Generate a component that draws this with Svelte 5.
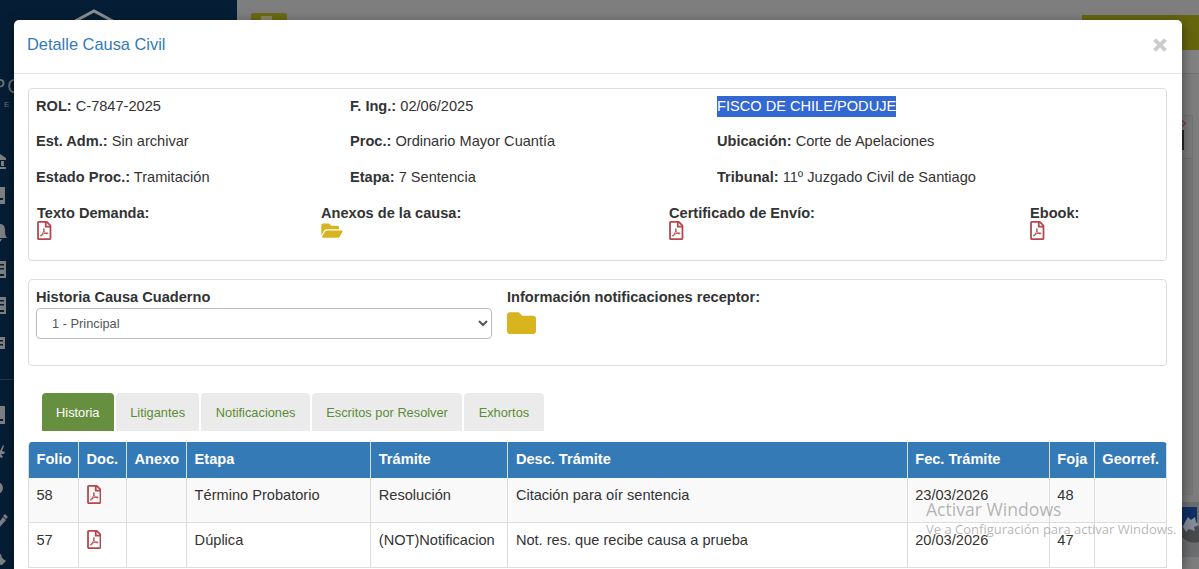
<script lang="ts">
	type Tramite = {
		folio: number;
		etapa: string;
		tramite: string;
		desc: string;
		fecha: string;
		foja: number;
	};

	const datos = [
		[
			{ label: "ROL:", value: "C-7847-2025" },
			{ label: "F. Ing.:", value: "02/06/2025" },
			{ label: "", value: "FISCO DE CHILE/PODUJE" },
		],
		[
			{ label: "Est. Adm.:", value: "Sin archivar" },
			{ label: "Proc.:", value: "Ordinario Mayor Cuantía" },
			{ label: "Ubicación:", value: "Corte de Apelaciones" },
		],
		[
			{ label: "Estado Proc.:", value: "Tramitación" },
			{ label: "Etapa:", value: "7 Sentencia" },
			{ label: "Tribunal:", value: "11º Juzgado Civil de Santiago" },
		],
	];

	const documentos = [
		{ label: "Texto Demanda:", icon: "pdf" },
		{ label: "Anexos de la causa:", icon: "folder" },
		{ label: "Certificado de Envío:", icon: "pdf" },
		{ label: "Ebook:", icon: "pdf" },
	];

	const tabs = ["Historia", "Litigantes", "Notificaciones", "Escritos por Resolver", "Exhortos"];
	let activeTab = $state("Historia");
	let cuaderno = $state("1");

	const columnas = [
		{ label: "Folio", width: 50 },
		{ label: "Doc.", width: 48 },
		{ label: "Anexo", width: 60 },
		{ label: "Etapa", width: 184 },
		{ label: "Trámite", width: 137 },
		{ label: "Desc. Trámite", width: 399 },
		{ label: "Fec. Trámite", width: 142 },
		{ label: "Foja", width: 45 },
		{ label: "Georref.", width: 72 },
	];

	const historia: Tramite[] = [
		{
			folio: 58,
			etapa: "Término Probatorio",
			tramite: "Resolución",
			desc: "Citación para oír sentencia",
			fecha: "23/03/2026",
			foja: 48,
		},
		{
			folio: 57,
			etapa: "Dúplica",
			tramite: "(NOT)Notificacion",
			desc: "Not. res. que recibe causa a prueba",
			fecha: "20/03/2026",
			foja: 47,
		},
	];
</script>

{#snippet pdfIcon()}
	<svg class="pdf" viewBox="0 0 384 512" aria-hidden="true">
		<path
			d="M369.9 97.9L286 14C277 5 264.8-.1 252.1-.1H48C21.500 0 0 21.500 0 48v416c0 26.500 21.500 48 48 48h288c26.500 0 48-21.500 48-48V131.900c0-12.700-5.100-25-14.100-34zM332.100 128H256V51.900l76.100 76.100zM48 464V48h160v104c0 13.300 10.700 24 24 24h104v288H48zm250.200-143.700c-12.200-12-47-8.700-64.400-6.500-17.200-10.500-28.700-25-36.800-46.300 3.900-16.100 10.100-40.600 5.400-56-4.200-26.200-37.800-23.600-42.600-5.900-4.400 16.100-.4 38.500 7 67.100-10 23.900-24.900 56-35.400 74.400-20 10.300-47 26.200-51 46.200-3.300 15.800 26 55.200 76.100-31.200 22.400-7.400 46.800-16.500 68.400-20.100 18.900 10.200 41 17 55.800 17 25.500 0 28-28.200 17.500-38.700zm-198.100 77.800c5.100-13.700 24.500-29.500 30.400-35-19 30.300-30.400 35.700-30.400 35zm81.600-190.600c7.400 0 6.700 32.100 1.800 40.800-4.400-13.900-4.300-40.800-1.800-40.800zm-24.400 136.600c9.700-16.900 18-37 24.700-54.700 8.300 15.100 18.900 27.200 30.100 35.500-20.800 4.300-38.900 13.100-54.800 19.200zm131.600-5s-5 6-37.300-7.800c35.100-2.600 40.900 5.400 37.300 7.800z"
		/>
	</svg>
{/snippet}

<div class="page">
	<aside class="sidebar">
		<svg class="roof" viewBox="0 0 60 22" aria-hidden="true">
			<path d="M2 17L30 2l28 15" />
		</svg>
		<div class="brand">PO</div>
		<div class="brand-sub">E</div>
		<svg class="menu-icons" viewBox="0 0 14 430" aria-hidden="true">
			<!-- bank, box, bell -->
			<path d="M-6 18l6-4 6 4v2H-6zM1 21h3v5H1zM-6 27H6v2H-6z" />
			<path fill-rule="evenodd" d="M-10 47H5v17H-10zM-1 58h4v2h-4z" />
			<path d="M-8 98c3-3 3-5 3-8 0-4 2-6 5-6s5 2 5 6c0 3 0 5 2 8zM-3 99h5l-2 3z" />
			<!-- archive cards -->
			<path fill-rule="evenodd" d="M-10 121H6v17H-10zM-4 124h8v1.500h-8zM-4 128h8v1.500h-8zM0 134h4v2H0z" />
			<path fill-rule="evenodd" d="M-10 157H6v17H-10zM-4 160h8v1.500h-8zM-4 164h8v1.500h-8zM0 170h4v2H0z" />
			<path fill-rule="evenodd" d="M-10 197H5v12H-10zM-3 200h6v1.500h-6zM-3 204h6v1.500h-6z" />
			<path fill-rule="evenodd" d="M-10 266H5v18H-10zM-1 279h4v2h-4z" />
			<path d="M-6 313l6-2 3-6 1 1-2 5 3 1-1 2h-3l2 3-2 1-4-4z" />
			<circle cx="-3" cy="348" r="6" />
			<path d="M-3 385l6-8 3 3-7 8-4 1zM3 376l2-2 3 3-2 2z" />
			<path d="M-4 417l5-3 1 4 4 3-4 4-6-1z" />
		</svg>
	</aside>
	<div class="backdrop-page">
		<div class="top-button"><span></span></div>
		<div class="olive-bar"></div>
		<div class="light-bar"></div>
		<div class="side-card">
			<span class="red-mark"></span>
			<span class="black-mark"></span>
		</div>
		<div class="helper">
			<svg viewBox="0 0 18 55" aria-hidden="true">
				<path d="M0 0h18v55H0z" fill="#6d6e70" />
				<path d="M0 5h16v18H0z" fill="#102f66" />
				<path d="M0 25Q8 15 18 25v15Q8 43 0 34z" fill="#484a4d" />
				<path d="M4 20l3-5 3 3 4-3 1 5 3 3-5 2 1 4-6-2-3 3-3-5z" fill="#858d98" />
			</svg>
		</div>
	</div>
</div>

<div class="modal" role="dialog" aria-label="Detalle Causa Civil">
	<header class="modal-header">
		<h4>Detalle Causa Civil</h4>
		<button class="close" aria-label="Cerrar">
			<svg viewBox="0 0 14 14"><path d="M2.200 2.200l9.600 9.600M11.800 2.200l-9.600 9.600" /></svg>
		</button>
	</header>

	<div class="modal-body">
		<section class="panel info">
			{#each datos as fila}
				<div class="fila">
					{#each fila as dato}
						<div>
							{#if dato.label}
								<strong>{dato.label}</strong> {dato.value}
							{:else}
								<span class="selected-text">{dato.value}</span>
							{/if}
						</div>
					{/each}
				</div>
			{/each}
			<div class="docs">
				{#each documentos as doc}
					<div class="doc">
						<strong>{doc.label}</strong>
						{#if doc.icon === "pdf"}
							{@render pdfIcon()}
						{:else}
							<svg class="folder-open" viewBox="0 0 576 512" aria-hidden="true">
								<path
									d="M572.694 292.093L500.270 416.248A63.997 63.997 0 0 1 444.989 448H45.025c-18.523 0-30.064-20.093-20.731-36.093l72.424-124.155A64 64 0 0 1 152 256h399.964c18.523 0 30.064 20.093 20.730 36.093zM152 224h328v-48c0-26.510-21.490-48-48-48H272l-64-64H48C21.490 64 0 85.490 0 112v278.046l69.077-118.418C86.214 242.250 117.989 224 152 224z"
								/>
							</svg>
						{/if}
					</div>
				{/each}
			</div>
		</section>

		<section class="panel cuaderno">
			<div class="cuaderno-select">
				<label for="cuaderno">Historia Causa Cuaderno</label>
				<select id="cuaderno" bind:value={cuaderno}>
					<option value="1">1 - Principal</option>
				</select>
			</div>
			<div class="receptor">
				<strong>Información notificaciones receptor:</strong>
				<svg class="folder" viewBox="0 64 512 384" aria-hidden="true">
					<path
						d="M464 128H272l-64-64H48C21.490 64 0 85.490 0 112v288c0 26.510 21.490 48 48 48h416c26.510 0 48-21.490 48-48V176c0-26.510-21.490-48-48-48z"
					/>
				</svg>
			</div>
		</section>

		<nav class="tabs">
			{#each tabs as tab}
				<button class:active={activeTab === tab} onclick={() => (activeTab = tab)}>{tab}</button>
			{/each}
		</nav>

		<table>
			<colgroup>
				{#each columnas as col}
					<col style="width: {col.width}px;" />
				{/each}
			</colgroup>
			<thead>
				<tr>
					{#each columnas as col}
						<th>{col.label}</th>
					{/each}
				</tr>
			</thead>
			<tbody>
				{#each historia as item}
					<tr>
						<td>{item.folio}</td>
						<td class="doc-cell">{@render pdfIcon()}</td>
						<td></td>
						<td>{item.etapa}</td>
						<td>{item.tramite}</td>
						<td>{item.desc}</td>
						<td>{item.fecha}</td>
						<td>{item.foja}</td>
						<td></td>
					</tr>
				{/each}
			</tbody>
		</table>
	</div>
</div>

<div class="watermark">
	<div class="watermark-title">Activar Windows</div>
	<div class="watermark-sub">Ve a Configuración para activar Windows.</div>
</div>

<style>
	:global(body) {
		margin: 0;
		overflow: hidden;
		font-family: "Liberation Sans", Arial, sans-serif;
		font-size: 14.6px;
		color: #333;
	}

	.page {
		display: flex;
		height: 569px;
		background: #7e7e7e;
	}

	.sidebar {
		position: relative;
		width: 237px;
		background: #061e35;
		overflow: hidden;
	}

	.roof {
		position: absolute;
		left: 64px;
		top: 9px;
		width: 60px;
		height: 22px;
		fill: none;
		stroke: #8c8f93;
		stroke-width: 3;
	}

	.brand {
		position: absolute;
		left: -8px;
		top: 75px;
		font-size: 20px;
		letter-spacing: 2px;
		color: #6d737b;
	}

	.brand-sub {
		position: absolute;
		left: 4px;
		top: 100px;
		font-size: 8px;
		color: #6d737b;
	}

	.menu-icons {
		position: absolute;
		left: 0;
		top: 140px;
		width: 14px;
		height: 430px;
		fill: #7d8084;
	}

	.sidebar::after {
		content: "";
		position: absolute;
		top: 379px;
		width: 100%;
		height: 1px;
		background: #26394b;
	}

	.backdrop-page {
		position: relative;
		flex: 1;
		overflow: hidden;
	}

	.top-button {
		position: absolute;
		left: 14px;
		top: 13px;
		width: 36px;
		height: 20px;
		border-radius: 3px;
		background: #6b6a14;
	}

	.top-button span {
		display: block;
		width: 11px;
		height: 6px;
		margin: 3px 0 0 10px;
		background: #898760;
	}

	.olive-bar {
		position: absolute;
		right: 0;
		top: 15px;
		width: 117px;
		height: 35px;
		background: #66660f;
	}

	.light-bar {
		position: absolute;
		right: 0;
		top: 50px;
		width: 40px;
		height: 23px;
		background: #838383;
		border-bottom: 1px solid #747474;
	}

	.side-card {
		position: absolute;
		right: 6px;
		top: 115px;
		width: 40px;
		height: 380px;
		background: linear-gradient(#7c7c7c 0 42px, #717171 42px 43px, #797979 43px);
		border: 1px solid #72727b;
		box-sizing: border-box;
	}

	.red-mark {
		position: absolute;
		right: 7px;
		top: 5px;
		width: 5px;
		height: 5px;
		border: 1px solid #802e2e;
		transform: rotate(45deg);
		box-sizing: border-box;
	}

	.black-mark {
		position: absolute;
		right: 8px;
		top: 14px;
		width: 8px;
		height: 20px;
		background: #262626;
	}

	.helper {
		position: absolute;
		right: 0;
		top: 502px;
		width: 18px;
		height: 55px;
	}

	.helper svg {
		display: block;
		width: 18px;
		height: 55px;
	}

	.modal {
		position: absolute;
		left: 14px;
		top: 20px;
		width: 1168px;
		height: 549px;
		overflow: hidden;
		background: #fff;
		border-radius: 5px 5px 0 0;
		box-shadow: 0 4px 13px rgba(0, 0, 0, 0.5);
	}

	.modal-header {
		display: flex;
		justify-content: space-between;
		align-items: center;
		height: 54px;
		padding: 0 14px 4px 13px;
		border-bottom: 1px solid #e5e5e5;
		box-sizing: border-box;
	}

	h4 {
		margin: 0;
		font-size: 16.4px;
		font-weight: 400;
		color: #337ab7;
	}

	.close {
		display: flex;
		padding: 0;
		border: 0;
		background: none;
		cursor: pointer;
	}

	.close svg {
		width: 16px;
		height: 16px;
		fill: none;
		stroke: #ccc;
		stroke-width: 3.4;
	}

	.modal-body {
		padding: 14px 15px 0 14px;
	}

	.panel {
		border: 1px solid #ddd;
		border-radius: 4px;
		box-sizing: border-box;
	}

	.info {
		height: 173px;
		padding-left: 7px;
	}

	.fila {
		display: grid;
		grid-template-columns: 314px 367px 1fr;
		align-items: center;
		height: 35.6px;
		line-height: 21px;
	}

	.fila > div {
		height: 22px;
	}

	.selected-text {
		display: inline-block;
		height: 21px;
		line-height: 20px;
		background: #3367d1;
		color: #fff;
	}

	.docs {
		display: grid;
		grid-template-columns: 284px 348px 361px 1fr;
		padding: 8px 0 0 1px;
	}

	.doc {
		display: flex;
		flex-direction: column;
		line-height: 18px;
	}

	.doc .pdf,
	.folder-open {
		margin-top: -0.5px;
	}

	.pdf {
		display: block;
		width: 14.5px;
		height: 19px;
		fill: #b4474d;
	}

	.folder-open {
		width: 22px;
		height: 19px;
		fill: #d6b420;
	}

	.folder {
		width: 29px;
		height: 22px;
		fill: #d8b41f;
	}

	.cuaderno {
		display: flex;
		gap: 15px;
		height: 87px;
		margin-top: 18px;
		padding: 8px 7px;
	}

	.cuaderno-select,
	.receptor {
		display: flex;
		flex-direction: column;
		line-height: 18px;
	}

	.cuaderno-select {
		width: 456px;
	}

	label {
		font-weight: 700;
	}

	select {
		height: 31px;
		margin-top: 2px;
		padding: 0 0 0 11px;
		border: 1px solid #bbb;
		border-radius: 4px;
		background: #fff;
		color: #555;
		font-family: inherit;
		font-size: 12.8px;
	}

	.receptor {
		gap: 6px;
	}

	.tabs {
		display: flex;
		gap: 2px;
		margin: 27px 0 11px 13.7px;
	}

	.tabs button {
		height: 38px;
		padding: 0 14.4px;
		border: 0;
		border-radius: 4px 4px 0 0;
		background: #ebebeb;
		color: #5b8c35;
		font-family: inherit;
		font-size: 12.8px;
		cursor: pointer;
	}

	.tabs button.active {
		background: #668f3f;
		color: #fff;
	}

	table {
		width: 1139px;
		table-layout: fixed;
		border-collapse: separate;
		border-spacing: 0;
		border-left: 1px solid #ddd;
		border-radius: 4px 4px 0 0;
		overflow: hidden;
	}

	th,
	td {
		padding: 0 0 0 7.5px;
		border-right: 1px solid #ddd;
		text-align: left;
		white-space: nowrap;
		box-sizing: border-box;
	}

	th {
		height: 36px;
		padding-bottom: 2px;
		background: #337ab7;
		color: #fff;
	}

	td {
		height: 45px;
		padding-bottom: 10px;
		border-bottom: 1px solid #ddd;
	}

	tbody tr:nth-child(odd) {
		background: #f9f9f9;
	}

	td.doc-cell {
		padding-bottom: 12px;
	}

	.watermark {
		position: absolute;
		left: 926px;
		top: 497px;
		font-family: "Open Sans", sans-serif;
		color: rgba(120, 120, 120, 0.55);
		white-space: nowrap;
		pointer-events: none;
	}

	.watermark-title {
		font-size: 17.6px;
		line-height: 24px;
	}

	.watermark-sub {
		font-size: 13px;
		line-height: 17px;
	}
</style>
